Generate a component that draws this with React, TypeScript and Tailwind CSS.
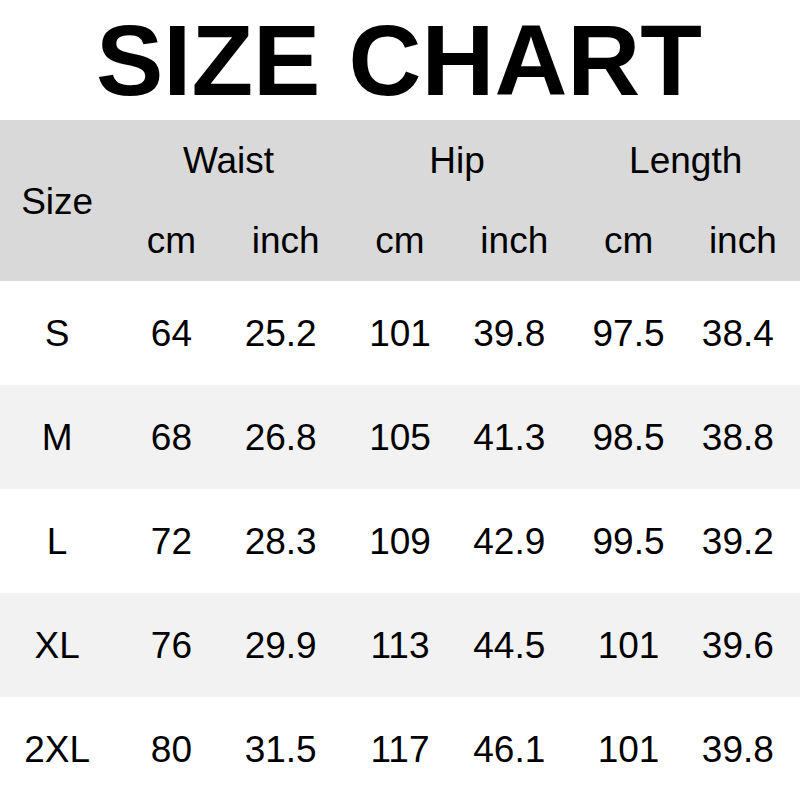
const rows = [
  ['S', '64', '25.2', '101', '39.8', '97.5', '38.4'],
  ['M', '68', '26.8', '105', '41.3', '98.5', '38.8'],
  ['L', '72', '28.3', '109', '42.9', '99.5', '39.2'],
  ['XL', '76', '29.9', '113', '44.5', '101', '39.6'],
  ['2XL', '80', '31.5', '117', '46.1', '101', '39.8'],
];

export default function App() {
  return (
    <div className="w-[800px] h-[800px] bg-white text-black font-['Liberation_Sans',Arial,sans-serif] overflow-hidden">
      {/* Title */}
      <div className="h-[120px] flex items-center justify-center">
        <h1 className="text-[101px] leading-none font-bold pr-[2px]">SIZE CHART</h1>
      </div>

      {/* Header */}
      <div className="h-[161px] bg-[#d9d9d9] grid grid-cols-7 grid-rows-2 text-[37px] leading-none">
        <div className="row-span-2 flex items-center justify-center pt-[2px]">Size</div>
        <div className="col-span-2 flex items-center justify-center">Waist</div>
        <div className="col-span-2 flex items-center justify-center">Hip</div>
        <div className="col-span-2 flex items-center justify-center">Length</div>
        {['cm', 'inch', 'cm', 'inch', 'cm', 'inch'].map((u, i) => (
          <div key={i} className="flex items-center justify-center">{u}</div>
        ))}
      </div>

      {/* Body */}
      {rows.map((r, i) => (
        <div
          key={r[0]}
          className={`h-[104px] grid grid-cols-7 text-[37px] leading-none ${i % 2 === 1 ? 'bg-[#f2f2f2]' : 'bg-white'}`}
        >
          {r.map((c, j) => (
            <div key={j} className={`flex items-center justify-center ${j > 0 && j % 2 === 0 ? 'pr-[10px]' : ''}`}>{c}</div>
          ))}
        </div>
      ))}
    </div>
  );
}
